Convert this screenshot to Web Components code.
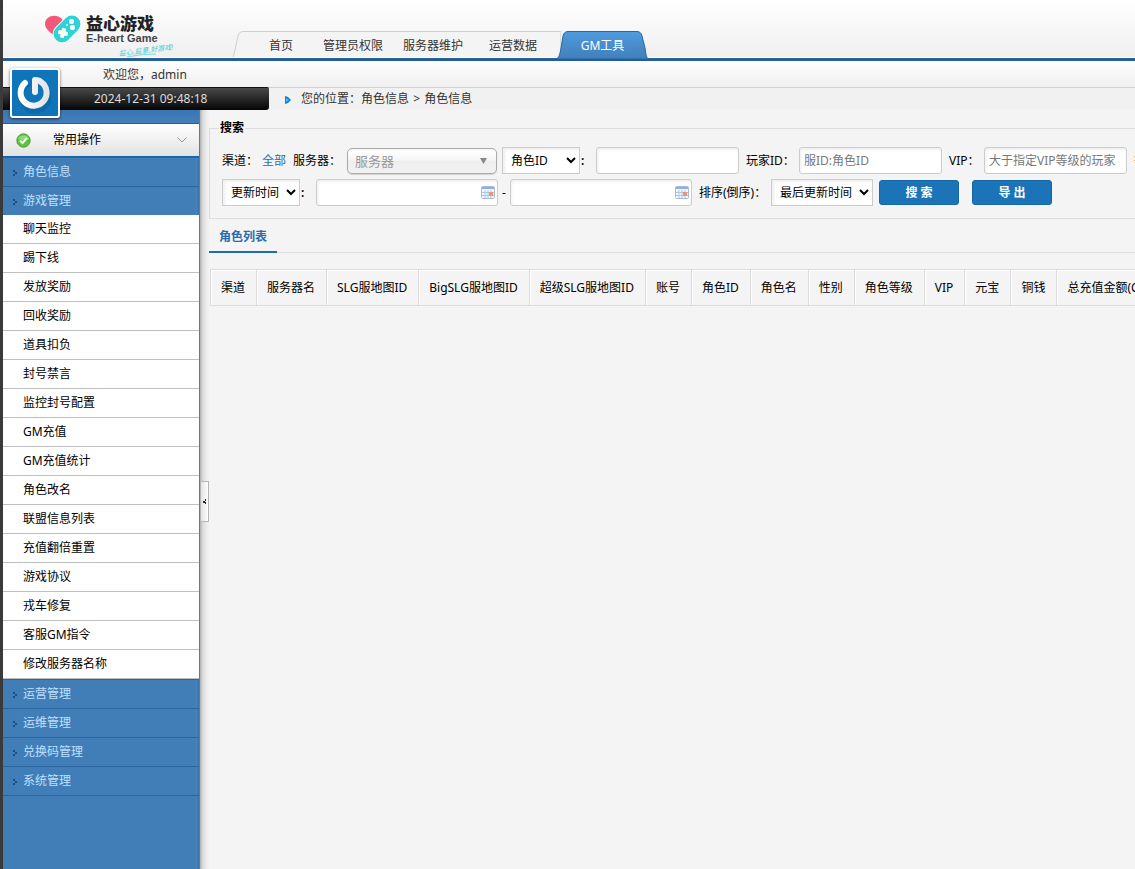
<!DOCTYPE html>
<html lang="zh-CN">
<head>
<meta charset="utf-8">
<title>益心游戏 GM工具</title>
<style>
html,body{margin:0;background:#f4f4f4}
body{font:12px/16px "Noto Sans","Noto Sans CJK SC",sans-serif;color:#000}
</style>
</head>
<body>
<gm-app></gm-app>
<script>
const define = (name, html, setup) => customElements.define(name, class extends HTMLElement {
  constructor() {
    super();
    this.attachShadow({mode: 'open'}).innerHTML = html;
  }
  connectedCallback() { if (setup) setup.call(this, this.shadowRoot); }
});

define('brand-logo', `
<style>:host{display:block;width:140px;height:50px}svg{display:block}text{font-family:"Liberation Sans","Noto Sans CJK SC",sans-serif}</style>
<svg width="140" height="50" viewBox="0 -8 140 50" role="img" aria-label="益心游戏 E-heart Game">
  <path d="M10 20C4 16 0 12 0 8C0 0 11-3 17 3L19 7 13 20Z" fill="#f2597a"/>
  <rect x="6" y="4" width="32" height="18" rx="9" transform="rotate(-45 22 13)" fill="#2ed3d6" stroke="#fafafa"/>
  <g transform="rotate(15 18 17)" fill="#fff"><rect x="13" y="15" width="10" height="4" rx="1"/><rect x="16" y="12" width="4" height="10" rx="1"/></g>
  <rect x="24" y="3" width="5" height="5" rx="2" fill="#fff"/><rect x="25" y="9" width="5" height="5" rx="2" fill="#fff"/><circle cx="22" cy="9" r="1" fill="#fff"/>
  <text x="41" y="14" font-weight="900" font-size="17" fill="#222">益心游戏</text>
  <text x="41" y="26" font-weight="700" font-size="11" fill="#444">E-heart Game</text>
  <text x="74" y="40" transform="rotate(-7 74 40)" font-style="italic" font-size="7" fill="#35cbd8">益心,益意,好游戏!</text>
  <path d="M82 41Q95 38 111 38" fill="none" stroke="#7adfe5"/>
</svg>`);

define('nav-tab', `
<style>
:host{display:block;position:relative;width:80px;height:28px}
:host([short]){width:64px}
:host([active]){width:93px;margin-left:3px}
a{display:block;position:relative;line-height:30px;text-align:center;color:#333;text-decoration:none}
svg{display:none;position:absolute;left:0;top:0}
:host([active]) svg{display:block}
:host([active]) a{color:#fff}
</style>
<svg width="93" height="28" viewBox="0 0 93 28" aria-hidden="true">
  <defs><linearGradient id="g" x2="0" y2="1"><stop stop-color="#4f9bdf"/><stop offset="1" stop-color="#417fba"/></linearGradient></defs>
  <path d="M0 28C3 27 4 23 5 17L7 5Q8 .5 12 .5H81Q85 .5 86 5L89 17C90 23 90 27 93 28Z" fill="url(#g)" stroke="#2765a5"/>
</svg>
<a href="#"><slot></slot></a>`);

define('site-header', `
<style>
:host{display:flex;height:58px;background:linear-gradient(#fff,#efefef);border-bottom:3px solid #2563a0;border-image:linear-gradient(#235d99,#4687c4,#235d99) 3;box-shadow:inset 0 -1px #fff}
brand-logo{margin:8px 0 0 42px;flex:none}
nav{display:flex;position:relative;margin-top:31px;height:28px;padding-left:22px;margin-left:42px}
nav>svg{position:absolute;left:6px;top:0}
</style>
<brand-logo></brand-logo>
<nav>
  <svg width="328" height="26" viewBox="0 0 328 26" aria-hidden="true"><path d="M.5 26L5 5Q6 .5 10 .5H328V26" fill="#f4f4f4" stroke="#cfcfcf"/></svg>
  <nav-tab short>首页</nav-tab><nav-tab>管理员权限</nav-tab><nav-tab>服务器维护</nav-tab><nav-tab>运营数据</nav-tab><nav-tab active>GM工具</nav-tab>
</nav>`);

define('user-bar', `
<style>
:host{display:block;position:relative;background:#f1f1f1;color:#333}
.hi{height:26px;line-height:28px;padding-left:100px;background:linear-gradient(#fefefe,#f0f0f0);border-bottom:1px solid #d2d2d2}
.row{display:flex;height:22px;line-height:22px}
.clock{flex:none;width:175px;padding-left:91px;margin-top:-1px;height:22px;line-height:22px;background:linear-gradient(#484848,#050505);border-top:1px solid #111;border-radius:0 2px 3px 0;color:#dcdcdc}
.row svg{margin:8px 10px 0 16px;flex:none}
.row i{font-style:normal;margin:0 1px}
button{position:absolute;z-index:2;left:7px;top:7px;width:50px;height:50px;padding:0;border:2px solid #fff;border-radius:3px;background:#0e75bb;box-shadow:0 1px 3px #0009}
button svg{display:block}
</style>
<div class="hi">欢迎您，admin</div>
<div class="row"><time class="clock">2024-12-31 09:48:18</time>
<svg width="6" height="8" aria-hidden="true"><path d="M0 0L3 1 6 4 3 7 0 8Z" fill="#0b80d5"/><path d="M1 2L4 4 1 6Z" fill="#4fb9fa"/></svg>
<span>您的位置：角色信息<i> &gt; </i>角色信息</span></div>
<button type="button" aria-label="退出"><svg width="46" height="46" viewBox="0 0 46 46"><defs><linearGradient id="p" x2="1" y2="0"><stop stop-color="#fff"/><stop offset="1" stop-color="#e4e4e4"/></linearGradient></defs>
<path d="M16 13A14 14 0 1 0 30 13" transform="translate(0 2)" fill="none" stroke="#0a558d" stroke-width="5" stroke-linecap="round" opacity=".35"/>
<path d="M13 13A13 13 0 1 0 29 12Q27 10 23 10V22" fill="none" stroke="url(#p)" stroke-width="6" stroke-linecap="round" stroke-linejoin="round"/></svg></button>`);

define('menu-parent', `
<style>
:host{display:block;height:28px;border-bottom:1px solid #2b659f}
:host([first]){border-top:1px solid #2b659f}
:host([open]){border-bottom:0}
a{display:flex;align-items:center;height:28px;line-height:28px;color:#bfe0ff;text-decoration:none;padding-left:10px}
svg{margin:2px 6px 0 0}
</style>
<a href="#"><svg width="4" height="6" aria-hidden="true"><path d="M0 0H2V2H0ZM2 2H4V4H2ZM0 4H2V6H0Z" fill="#1d4f83"/></svg><slot></slot></a>`);

define('menu-item', `
<style>
:host{display:block;height:28px;background:#fff;border-bottom:1px solid #c0c0c0}
a{display:block;line-height:28px;padding-left:20px;color:#000;text-decoration:none}
</style><a href="#"><slot></slot></a>`);

define('side-menu', `
<style>
:host{display:block;border-right:1px solid #4083c4;background:linear-gradient(270deg,#3a76b0,#3a76b0 1px,#4583be 2px,#417eb7 4px)}
.cap{height:13px;background:linear-gradient(#3a77b2,#447fbb)}
button{display:flex;align-items:center;box-sizing:border-box;width:100%;height:34px;padding:0 12px 0 13px;border:solid #1464ad;border-width:1px 0;background:linear-gradient(#fff,#e2e2e2);font:inherit;color:#000;text-align:left}
button span{flex:1;padding-left:22px}
button svg{display:block}
</style>
<div class="cap"></div>
<button type="button"><svg width="15" height="15" viewBox="0 0 15 15"><circle cx="7.5" cy="7.5" r="6.7" fill="#5fc141" stroke="#55a33d"/><path d="M2 6A6 6 0 0 1 13 6Q8 8 2 6" fill="#8ade70"/><path d="M4 7.5L6.5 10 11 5" fill="none" stroke="#fff" stroke-width="2"/></svg><span>常用操作</span>
<svg width="10" height="6"><path d="M.5.5L5 5 9.500.5" fill="none" stroke="#999"/></svg></button>
<nav>
<menu-parent first>角色信息</menu-parent><menu-parent open>游戏管理</menu-parent>
<menu-item>聊天监控</menu-item><menu-item>踢下线</menu-item><menu-item>发放奖励</menu-item><menu-item>回收奖励</menu-item><menu-item>道具扣负</menu-item><menu-item>封号禁言</menu-item><menu-item>监控封号配置</menu-item><menu-item>GM充值</menu-item><menu-item>GM充值统计</menu-item><menu-item>角色改名</menu-item><menu-item>联盟信息列表</menu-item><menu-item>充值翻倍重置</menu-item><menu-item>游戏协议</menu-item><menu-item>戎车修复</menu-item><menu-item>客服GM指令</menu-item><menu-item>修改服务器名称</menu-item>
<menu-parent first>运营管理</menu-parent><menu-parent>运维管理</menu-parent><menu-parent>兑换码管理</menu-parent><menu-parent>系统管理</menu-parent>
</nav>`);

define('side-splitter', `
<style>
:host{display:flex;align-items:center;width:9px;background:linear-gradient(90deg,#b0b0b0,#ddd 3px,#f1f1f1 8px)}
button{box-sizing:border-box;width:9px;height:41px;padding:0;margin-top:24px;border:1px solid #b5b5b5;background:linear-gradient(90deg,#e2e2e2,#fff)}
svg{display:block;margin-left:2px}
</style><button type="button" aria-label="收起菜单"><svg width="4" height="6"><path d="M2 0H3V2H2V3H3V5H2V4H0V2H2Z" fill="#222"/></svg></button>`);

const calendar = `<svg width="14" height="13" viewBox="0 0 14 13" aria-hidden="true"><rect x=".5" y=".5" width="13" height="12" rx="1" fill="#f3f7ff" stroke="#a9bbd9"/><path d="M1 1H13V3H1Z" fill="#8faee0"/><path d="M1 6.500H13M1 9.500H13M4 4V12M7 4V12M10 4V12" stroke="#b0c4e4"/><rect x="8" y="6" width="4" height="4" fill="#f19370"/></svg>`;
define('search-form', `
<style>
:host{display:block;overflow:hidden}
fieldset{margin:0 -2px 0 0;padding:10px 0 12px 12px;border:1px solid #dcdcdc;min-width:0}
legend{padding:0 1px;margin-left:-3px;font-weight:700;line-height:18px}
.row{display:flex;align-items:center;white-space:nowrap;height:27px}
.row+.row{margin-top:5px}
.row>*{flex:none}
a{color:#2a6bad;text-decoration:none;margin-right:7px}
input,select,button{box-sizing:border-box;font:inherit;height:27px}
input{width:143px;padding:0 4px;border:1px solid #ccc;border-radius:3px;background:#fff;box-shadow:inset 1px 2px 3px #0001}
input::placeholder{color:#777}
select{width:78px;padding:0 4px;border:1px solid #ccc;border-radius:0;background-color:#fff;color:#000;box-shadow:inset 2px 2px 3px #0001}
.sort{width:102px}
.w40{width:40px}.w54{width:54px}.w53{width:53px}.w35{width:35px}.w72{width:72px}
.colon{width:16px;padding-left:1px;box-sizing:border-box;font-weight:600}
.dash{width:12px;text-align:center}
.gap{margin-left:7px}
.pick{position:relative;margin-right:5px}
.pick select{display:block;appearance:none;width:150px;height:26px;padding:0 7px;border-color:#aaa;border-radius:5px;background:linear-gradient(#f4f4f4,#fff 10%,#f6f6f6 45%,#eee 50%,#f2f2f2);color:#999;font-size:13px;box-shadow:0 1px 1px #0002}
.pick svg{position:absolute;right:10px;top:10px}
.date{position:relative}.date input{display:block;width:182px;padding-right:24px}.date svg{position:absolute;right:3px;top:7px}
button{width:80px;height:25px;margin-left:6px;padding:0;border:1px solid #1667a8;border-radius:3px;background:#1b74b8;color:#fff;font-weight:700;line-height:22px}
button+button{margin-left:13px}
</style>
<form><fieldset><legend>搜索</legend>
<div class="row"><span class="w40">渠道：</span><a href="#">全部</a><label class="w54" for="server">服务器：</label>
<span class="pick"><select id="server"><option>服务器</option></select><svg width="7" height="6" aria-hidden="true"><path d="M0 0H7L3.500 6Z" fill="#888"/></svg></span>
<select id="key" aria-label="查询字段"><option>角色ID</option></select><label class="colon" for="kv">:</label><input id="kv" type="text">
<label class="w53 gap" for="pid">玩家ID：</label><input id="pid" type="text" placeholder="服ID:角色ID">
<label class="w35 gap" for="vip">VIP：</label><input id="vip" type="text" placeholder="大于指定VIP等级的玩家"><label class="gap" for="lv">等级：</label><input id="lv" type="text"></div>
<div class="row"><select aria-label="时间字段"><option>更新时间</option></select><label class="colon" for="from">:</label>
<span class="date"><input id="from" type="text">${calendar}</span><span class="dash">-</span><span class="date"><input type="text" aria-label="结束时间">${calendar}</span>
<label class="w72 gap" for="sort">排序(倒序)：</label><select class="sort" id="sort"><option>最后更新时间</option></select><button type="button">搜 索</button><button type="button">导 出</button></div>
</fieldset></form>`);

define('tab-strip', `
<style>
:host{display:flex;height:33px;border-bottom:1px solid #dfdfdf}
a{height:32px;line-height:36px;padding:0 10px;border-bottom:2px solid #1f6bb2;color:#2a6bad;font-weight:700;text-decoration:none}
</style><a href="#"><slot></slot></a>`);

define('role-table', `
<style>
:host{display:block;overflow:hidden;padding:16px 0 0 1px}
table{border-spacing:0;border:solid #dcdcdc;border-width:1px 0}
th{height:35px;padding:0 11px 0 10px;border-left:1px solid #dcdcdc;box-shadow:inset 1px 1px #fff;font-weight:400;white-space:nowrap}
</style><table><thead><tr></tr></thead></table>`, function (root) {
  const tr = root.querySelector('tr');
  for (const name of ['渠道','服务器名','SLG服地图ID','BigSLG服地图ID','超级SLG服地图ID','账号','角色ID','角色名','性别','角色等级','VIP','元宝','铜钱','总充值金额(CNY)']) {
    const th = document.createElement('th');
    th.scope = 'col';
    th.textContent = name;
    tr.append(th);
  }
});

define('gm-app', `
<style>
:host{display:flex;flex-direction:column;min-height:100vh;box-sizing:border-box;border-left:3px solid #3a3a3a;overflow:hidden}
.body{display:grid;grid-template-columns:197px 9px minmax(0,1fr);flex:1}
main{padding-top:9px}
</style>
<site-header></site-header><user-bar></user-bar>
<div class="body"><side-menu></side-menu><side-splitter></side-splitter>
<main><search-form></search-form><tab-strip>角色列表</tab-strip><role-table></role-table></main></div>`);
</script>
</body>
</html>
